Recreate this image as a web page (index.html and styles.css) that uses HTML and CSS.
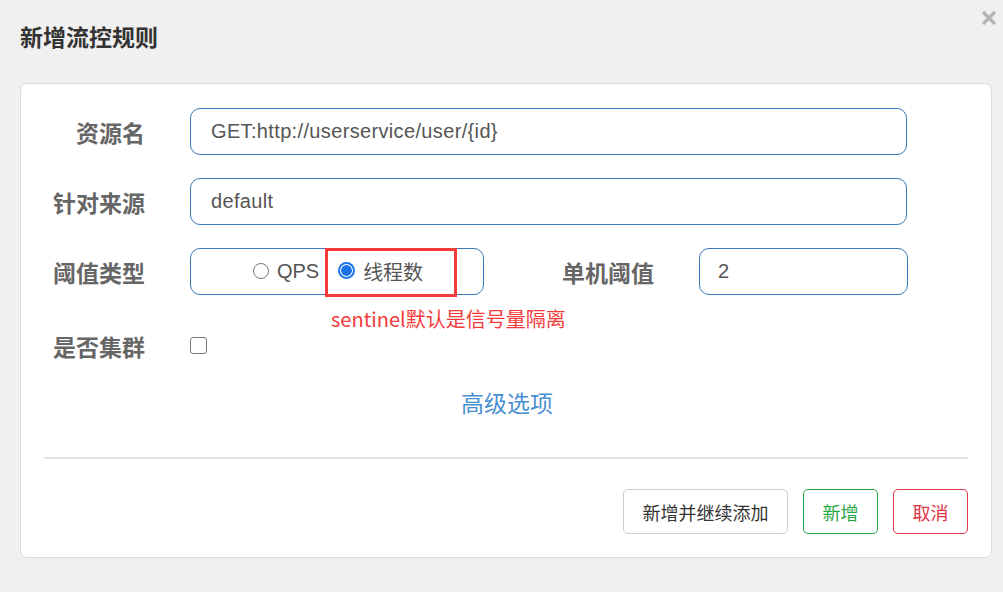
FILE: index.html
```html
<!DOCTYPE html>
<html lang="zh-CN">
<head>
<meta charset="utf-8">
<title>新增流控规则</title>
<link rel="stylesheet" href="styles.css">
</head>
<body>
<div class="dialog">
  <div class="header">
    <h1 class="title">新增流控规则</h1>
    <svg class="close" width="16" height="16" viewBox="0 0 16 16"><path d="M2 2 L14 14 M14 2 L2 14" stroke="#b5b5b5" stroke-width="3.2" stroke-linecap="butt"/></svg>
  </div>
  <div class="card">
    <div class="form">
      <div class="row">
        <label class="label">资源名</label>
        <div class="input wide">GET:http://userservice/user/{id}</div>
      </div>
      <div class="row">
        <label class="label">针对来源</label>
        <div class="input wide">default</div>
      </div>
      <div class="row">
        <label class="label">阈值类型</label>
        <div class="radio-box">
          <span class="opt"><span class="radio"></span>QPS</span>
          <span class="opt"><span class="radio on"></span>线程数</span>
          <span class="mark-box"></span>
          <span class="note">sentinel默认是信号量隔离</span>
        </div>
        <label class="label label2">单机阈值</label>
        <div class="input small">2</div>
      </div>
      <div class="row row-check">
        <label class="label">是否集群</label>
        <span class="checkbox"></span>
      </div>
    </div>
    <div class="advanced">高级选项</div>
    <div class="divider"></div>
    <div class="actions">
      <button class="btn btn-default">新增并继续添加</button>
      <button class="btn btn-success">新增</button>
      <button class="btn btn-danger">取消</button>
    </div>
  </div>
</div>
</body>
</html>
```
FILE: styles.css
```css
html, body {
  margin: 0;
  padding: 0;
  background: #f0f0f0;
}
body {
  font-family: "Noto Sans CJK SC", "Liberation Sans", sans-serif;
  width: 1003px;
  height: 592px;
  overflow: hidden;
}
.dialog {
  padding: 0 11px 0 20px;
}
.header {
  position: relative;
  padding-top: 21px;
  height: 62px;
}
.title {
  margin: 0;
  font-size: 23px;
  line-height: 30px;
  font-weight: bold;
  color: #333;
}
.close {
  position: absolute;
  right: -5px;
  top: 10px;
}
.card {
  background: #fff;
  border: 1px solid #dcdcdc;
  border-radius: 7px;
  padding: 24px 23px 22px 23px;
  height: 475px;
  box-sizing: border-box;
}
.form {
  display: flex;
  flex-direction: column;
  gap: 23px;
}
.row {
  display: flex;
  align-items: center;
  height: 47px;
}
.row-check {
  margin-top: 4px;
}
.label {
  width: 101px;
  margin-right: 45px;
  text-align: right;
  font-size: 23px;
  font-weight: bold;
  color: #666;
  line-height: 30px;
}
.label2 {
  width: 170px;
}
.input {
  height: 47px;
  box-sizing: border-box;
  border: 1px solid #3a78b8;
  border-radius: 10px;
  padding: 0 20px;
  display: flex;
  align-items: center;
  font-family: "Liberation Sans", Arial, sans-serif;
  font-size: 20px;
  color: #555;
}
.wide {
  width: 717px;
  letter-spacing: 0.35px;
}
.small {
  width: 209px;
  padding-left: 18px;
}
.radio-box {
  position: relative;
  width: 294px;
  height: 47px;
  box-sizing: border-box;
  border: 1px solid #3a78b8;
  border-radius: 10px;
  display: flex;
  align-items: center;
  justify-content: center;
  gap: 19px;
  padding-left: 2px;
  font-size: 20px;
  color: #555;
}
.opt {
  display: flex;
  align-items: center;
  gap: 8px;
}
.opt:first-child {
  font-family: "Liberation Sans", Arial, sans-serif;
}
.radio {
  width: 14px;
  height: 14px;
  border: 1.3px solid #767676;
  border-radius: 50%;
  background: #fff;
  box-sizing: content-box;
  margin-top: -2px;
}
.radio.on {
  border: 2px solid #1a73e8;
  width: 13px;
  height: 13px;
  background: radial-gradient(circle, #1a73e8 0 5px, #fff 5.6px);
}
.mark-box {
  position: absolute;
  left: 134px;
  top: 0;
  width: 132px;
  height: 49px;
  box-sizing: border-box;
  border: 3px solid #f23b3b;
  margin-top: -1px;
}
.note {
  position: absolute;
  left: 140px;
  top: 58px;
  white-space: nowrap;
  font-size: 20px;
  line-height: 24px;
  color: #f23b3b;
}
.checkbox {
  width: 15px;
  height: 15px;
  border: 1.5px solid #777;
  border-radius: 3px;
  background: #fff;
}
.advanced {
  margin-top: 18px;
  text-align: center;
  font-size: 23px;
  line-height: 30px;
  color: #4a8fd0;
  padding-left: 2px;
}
.divider {
  margin-top: 40px;
  height: 2px;
  background: #e3e3e3;
}
.actions {
  margin-top: 30px;
  display: flex;
  justify-content: flex-end;
  gap: 15px;
}
.btn {
  height: 45px;
  box-sizing: border-box;
  background: #fff;
  border-radius: 5px;
  font-family: "Noto Sans CJK SC", sans-serif;
  font-size: 18px;
  padding: 0 18px;
  cursor: pointer;
}
.btn-default {
  width: 165px;
  border: 1px solid #cccccc;
  color: #333;
}
.btn-success {
  width: 75px;
  border: 1px solid #28a745;
  color: #28a745;
  padding: 0;
}
.btn-danger {
  width: 75px;
  border: 1px solid #dc3545;
  color: #dc3545;
  padding: 0;
}
```
